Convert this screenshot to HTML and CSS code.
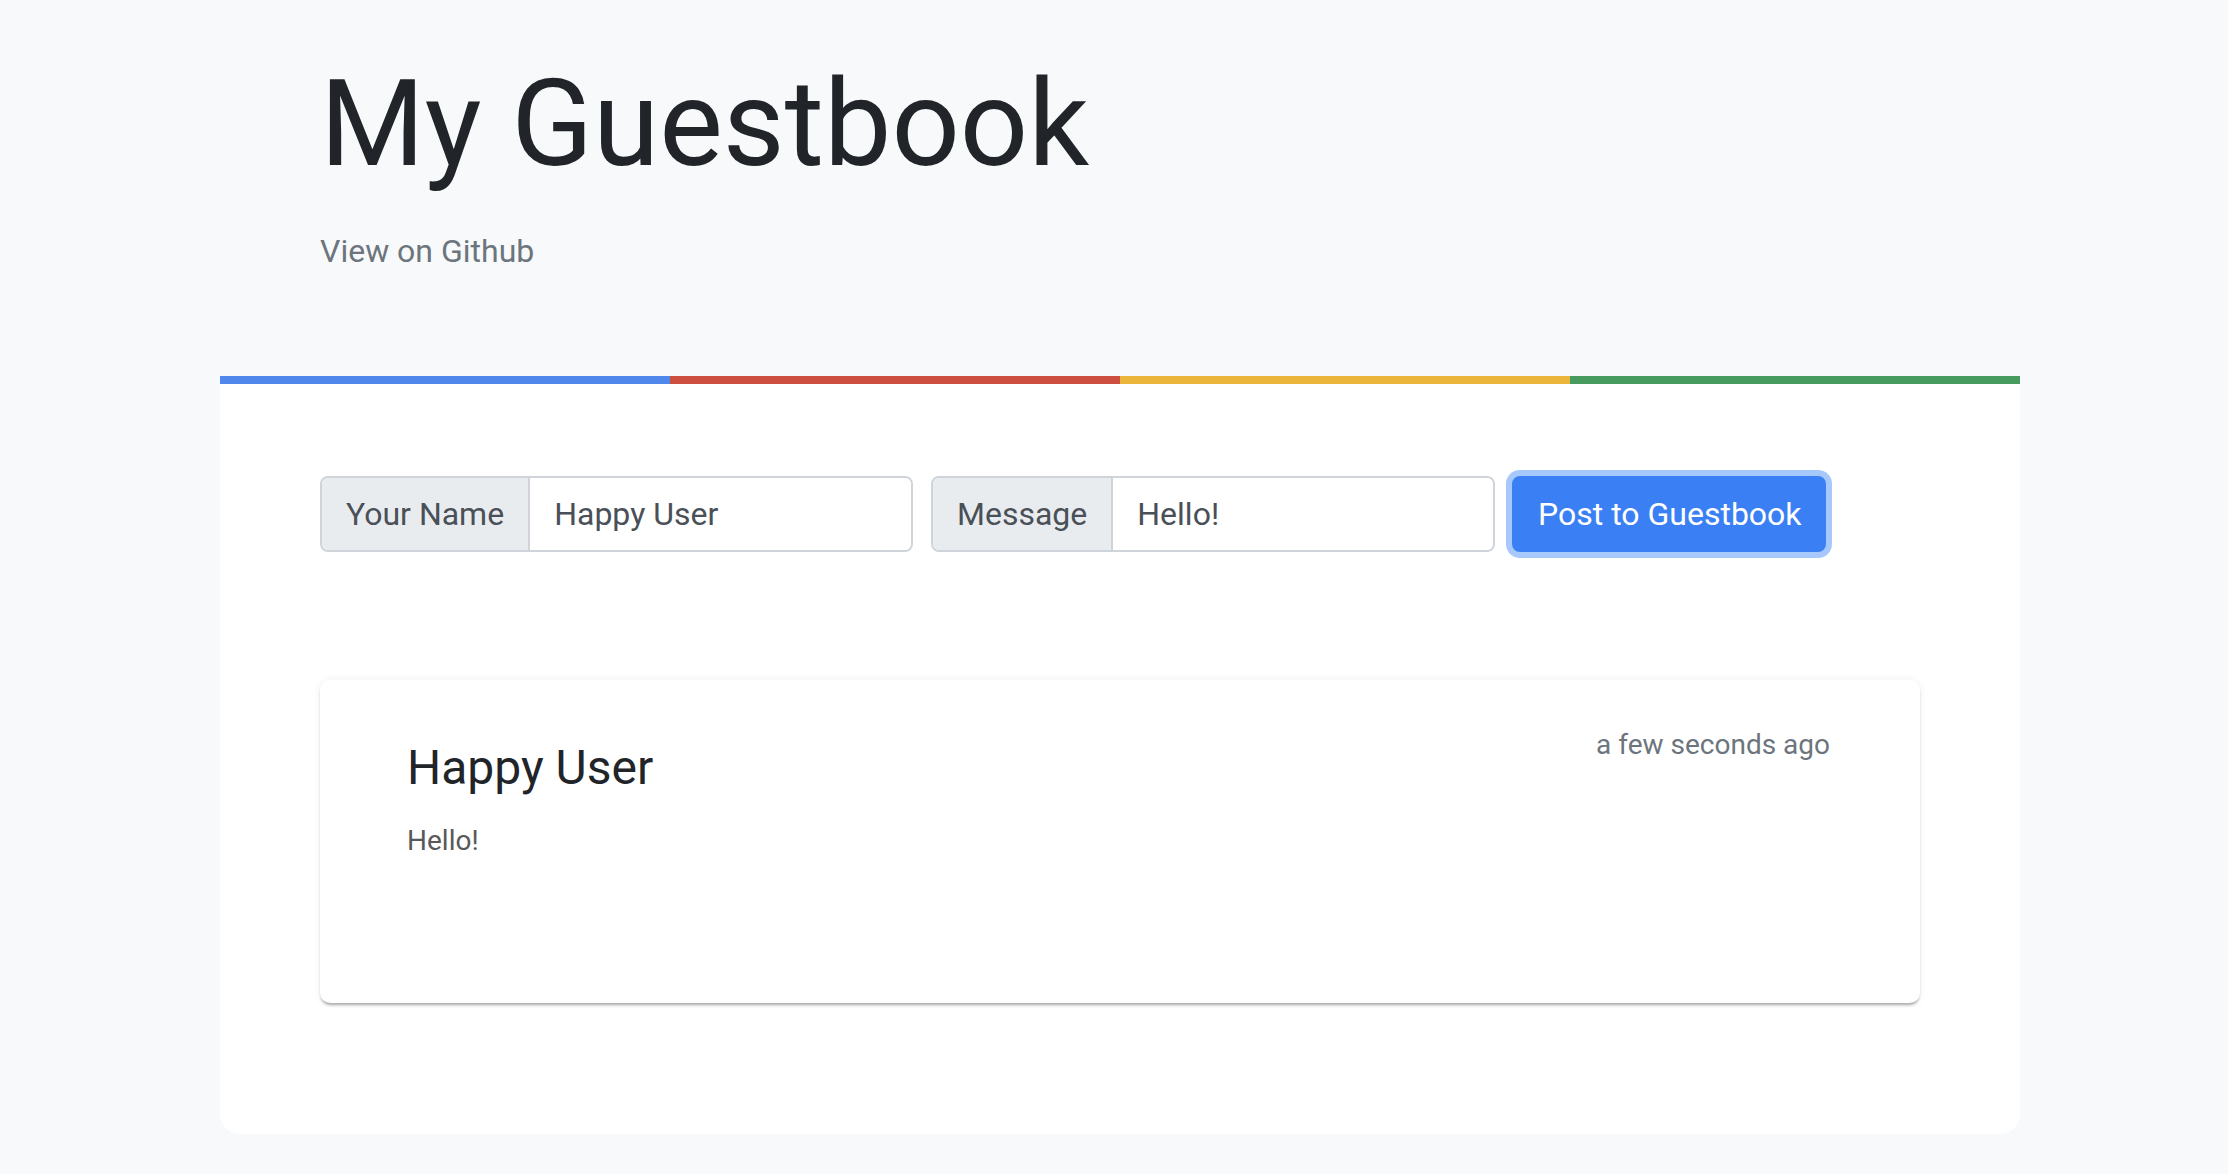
FILE: index.html
```html
<!DOCTYPE html>
<html lang="en">
<head>
<meta charset="utf-8">
<title>My Guestbook</title>
<link rel="stylesheet" href="styles.css">
</head>
<body>
<div class="container">
  <header class="header">
    <h1 class="title">My Guestbook</h1>
    <a class="github" href="#">View on Github</a>
  </header>
  <main class="main">
    <div class="bar">
      <span class="bar-blue"></span>
      <span class="bar-red"></span>
      <span class="bar-yellow"></span>
      <span class="bar-green"></span>
    </div>
    <div class="main-body">
      <form class="form-row">
        <div class="input-group group-name">
          <span class="addon">Your Name</span>
          <input class="field" type="text" value="Happy User">
        </div>
        <div class="input-group group-msg">
          <span class="addon">Message</span>
          <input class="field" type="text" value="Hello!">
        </div>
        <button class="btn" type="button">Post to Guestbook</button>
      </form>
      <div class="entry">
        <div class="entry-head">
          <h4 class="entry-name">Happy User</h4>
          <span class="entry-time">a few seconds ago</span>
        </div>
        <p class="entry-msg">Hello!</p>
      </div>
    </div>
  </main>
</div>
</body>
</html>
```
FILE: styles.css
```css
* { box-sizing: border-box; }

body {
  margin: 0;
  padding-left: 12px;
  background: #f8f9fa;
  font-family: Roboto, "Liberation Sans", sans-serif;
  color: #212529;
}

.container {
  width: 1800px;
  margin: 0 auto;
}

.header {
  padding: 52px 100px 0;
}

.title {
  margin: 0 0 31px;
  font-size: 120px;
  font-weight: 400;
  line-height: 1.2;
  color: #212529;
}

.github {
  display: block;
  font-size: 32px;
  line-height: 48px;
  color: #6c757d;
  text-decoration: none;
}

.main {
  margin-top: 101px;
  background: #ffffff;
  border-radius: 0 0 20px 20px;
}

.bar {
  display: flex;
  height: 8px;
}
.bar span { flex: 1; }
.bar-blue { background: #4f87ea; }
.bar-red { background: #cc4f40; }
.bar-yellow { background: #ebb43b; }
.bar-green { background: #479b5f; }

.main-body {
  padding: 92px 100px 131px;
}

.form-row {
  display: flex;
  align-items: stretch;
  height: 76px;
  margin: 0;
}

.input-group {
  display: flex;
  border: 2px solid #ced4da;
  border-radius: 8px;
  overflow: hidden;
  background: #ffffff;
}
.group-name { width: 593px; }
.group-msg { width: 564px; margin-left: 18px; }

.addon {
  display: flex;
  align-items: center;
  padding: 0 24px;
  background: #e9ecef;
  border-right: 2px solid #ced4da;
  font-size: 32px;
  line-height: 48px;
  color: #495057;
  white-space: nowrap;
}

.field {
  flex: 1;
  min-width: 0;
  border: 0;
  outline: none;
  padding: 0 24px;
  font-family: inherit;
  font-size: 32px;
  line-height: 48px;
  color: #495057;
  background: #ffffff;
}

.btn {
  margin-left: 17px;
  width: 314px;
  border: 2px solid #3a7ff4;
  border-radius: 8px;
  background: #3a7ff4;
  color: #ffffff;
  font-family: inherit;
  font-size: 32px;
  line-height: 48px;
  padding: 0 24px;
  box-shadow: 0 0 0 6px #a6c8fa;
  white-space: nowrap;
}

.entry {
  margin-top: 128px;
  background: #ffffff;
  border-radius: 10px;
  padding: 44px 90px 141px 87px;
  box-shadow: 0 3px 3px -1px rgba(0, 0, 0, 0.32), 0 0 10px rgba(0, 0, 0, 0.06);
}

.entry-head {
  display: flex;
  justify-content: space-between;
  align-items: flex-start;
}

.entry-name {
  margin: 15px 0 0;
  font-size: 48px;
  font-weight: 400;
  line-height: 1.2;
  color: #212529;
}

.entry-time {
  font-size: 28px;
  line-height: 42px;
  color: #6c757d;
}

.entry-msg {
  margin: 23px 0 0;
  font-size: 28px;
  line-height: 42px;
  color: #595959;
}
```
